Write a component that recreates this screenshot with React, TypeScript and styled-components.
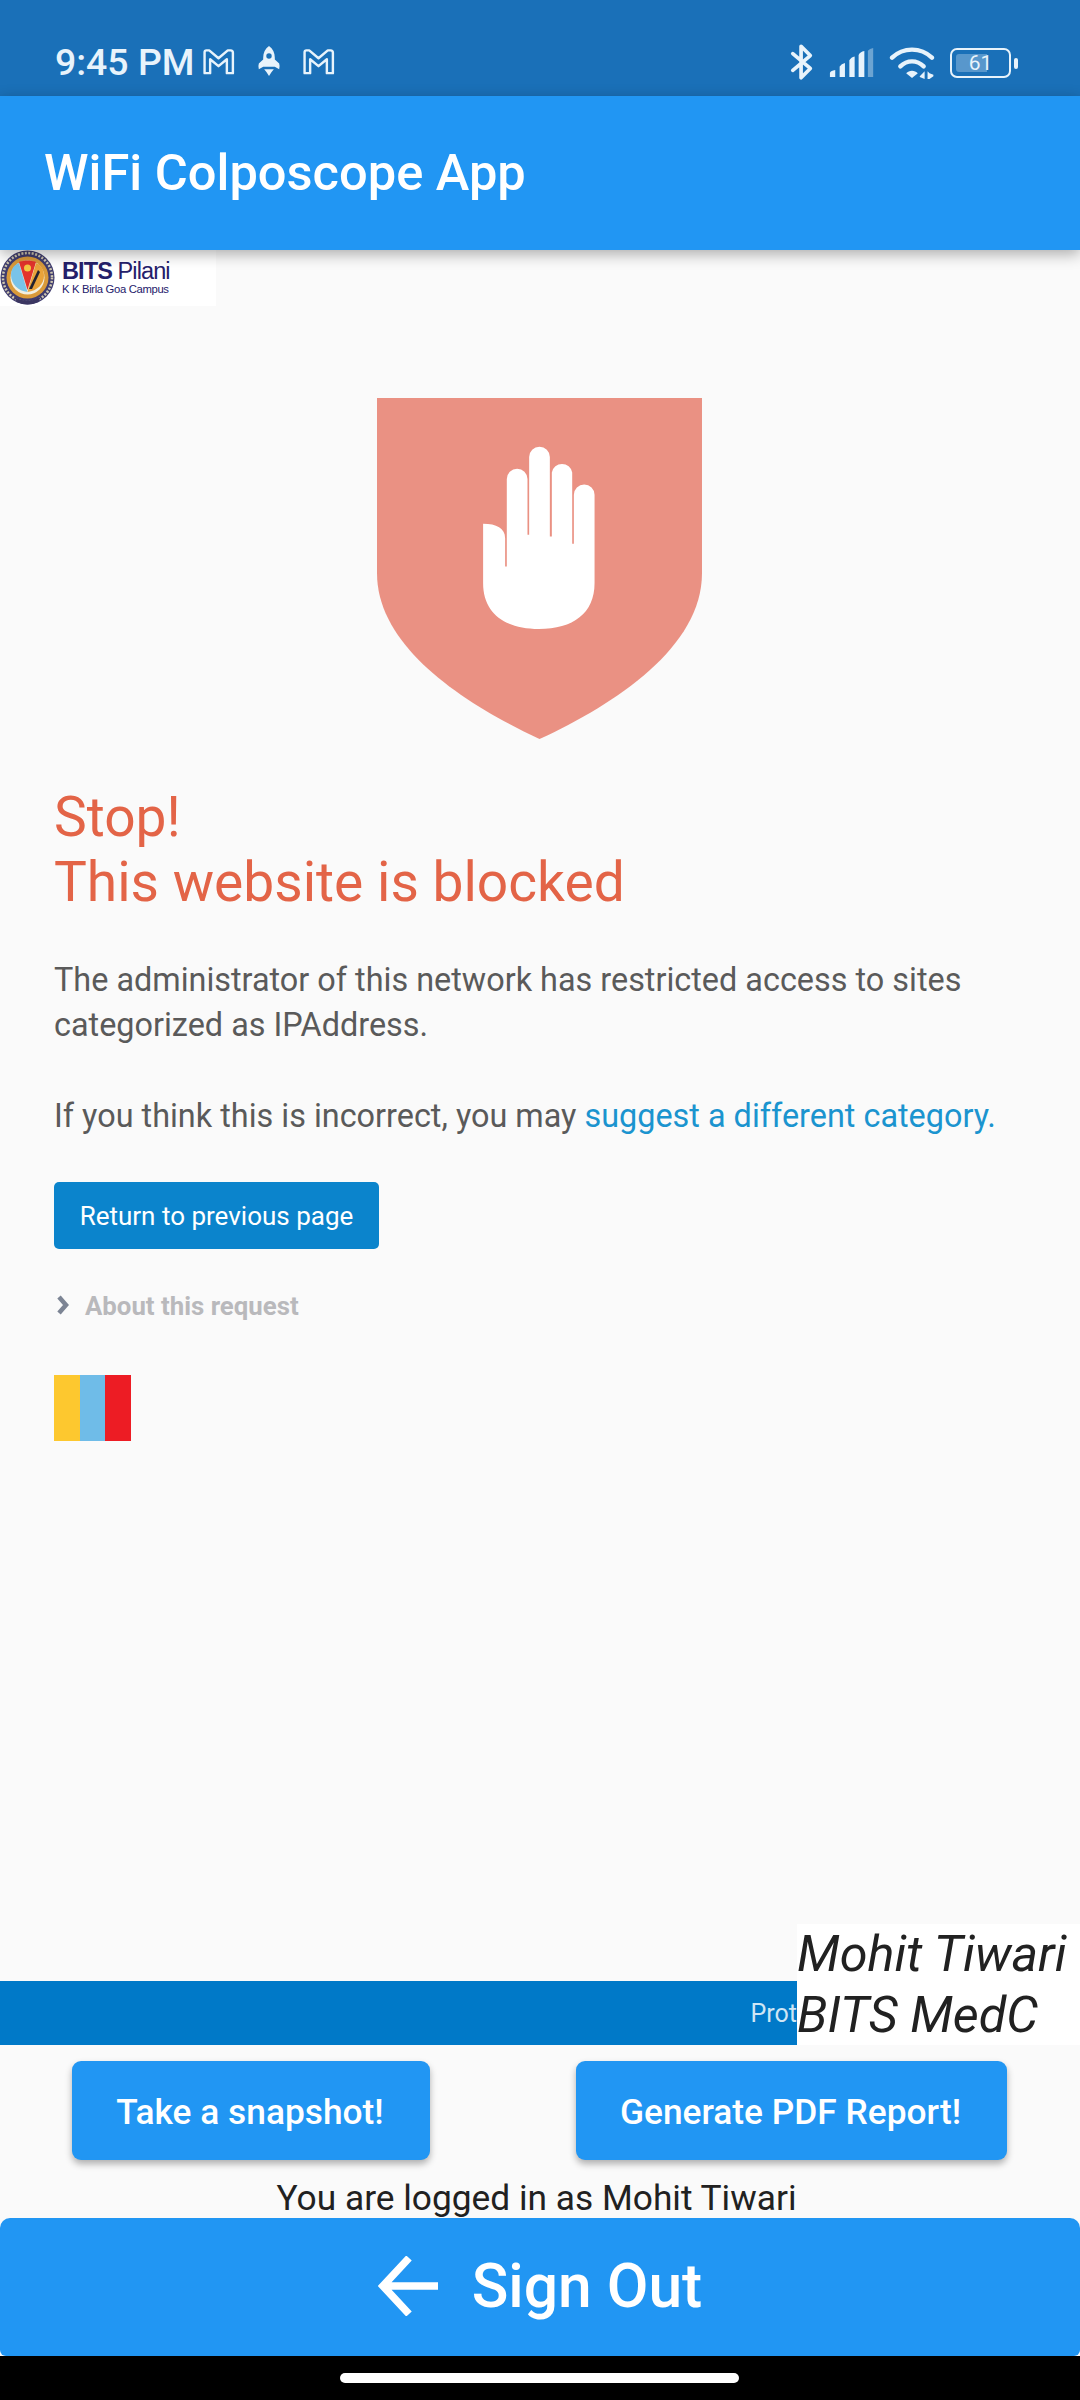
import React from "react";
import styled, { createGlobalStyle } from "styled-components";

const Global = createGlobalStyle`
  html, body { margin: 0; padding: 0; background: #fafafa; }
  * { box-sizing: border-box; }
  body { font-family: Roboto, "Liberation Sans", sans-serif; }
`;

const Screen = styled.div`
  width: 1080px; height: 2400px; display: flex; flex-direction: column; overflow: hidden; background: #fafafa;
`;
const StatusBar = styled.div`
  height: 96px; flex: none; background: #1a70b8; color: #e8f3fb; display: flex; align-items: flex-start;
  justify-content: space-between; padding: 39px 62px 0 55px;
`;
const StatusLeft = styled.div`display: flex; align-items: center; height: 45px;`;
const Time = styled.span`font-size: 37.4px; font-weight: 500; line-height: 48px; width: 147px; white-space: nowrap;`;
const StatusIcon = styled.svg<{ $ml?: number; $mt?: number }>`
  display: block; flex: none; margin-left: ${p => p.$ml ?? 0}px; margin-top: ${p => p.$mt ?? 0}px;
`;
const StatusRight = styled.div`display: flex; align-items: flex-start; height: 45px; margin-top: 3px;`;
const AppBar = styled.header`
  height: 154px; flex: none; background: #2196f3; color: #fff; display: flex; align-items: center; padding: 0 0 0 44px;
  box-shadow: 0 4px 14px rgba(0,0,0,.32); position: relative; z-index: 2;
`;
const AppTitle = styled.h1`margin: 0; font-size: 50.6px; font-weight: 500; line-height: 1;`;
const Page = styled.main`flex: 1; display: flex; flex-direction: column; min-height: 0;`;
const LogoCard = styled.div`
  width: 216px; height: 56px; background: #fff; display: flex; align-items: center; flex: none;
`;
const LogoText = styled.div`display: flex; flex-direction: column; margin-left: 6px; color: #25206b; margin-top: -2px;`;
const LogoTitle = styled.div`font-size: 23.5px; line-height: 24px; letter-spacing: -.9px; font-family: "Liberation Sans", sans-serif; white-space: nowrap;`;
const LogoStrong = styled.b`font-weight: 700;`;
const LogoSub = styled.div`font-size: 11.3px; line-height: 13px; letter-spacing: -.35px; font-family: "Liberation Sans", sans-serif; white-space: nowrap;`;
const Notice = styled.section`flex: 1; padding: 92px 0 0 54px; display: flex; flex-direction: column; align-items: flex-start;`;
const Shield = styled.svg`display: block; margin-left: 323px; flex: none;`;
const Heading = styled.h2`
  margin: 46px 0 0; font-size: 55.1px; line-height: 65px; font-weight: 400; color: #e36447;
`;
const Copy = styled.p`
  margin: 0; font-size: 32.4px; line-height: 45px; font-weight: 400; color: #5a5a5a; white-space: nowrap;
`;
const CopyFirst = styled(Copy)`margin-top: 43px;`;
const CopySecond = styled(Copy)`margin-top: 46px;`;
const TextLink = styled.a`color: #1b94cf; text-decoration: none;`;
const ReturnButton = styled.button`
  margin-top: 43px; width: 325px; height: 67px; border: 0; border-radius: 5px; background: #0b84cc; color: #fff;
  font: 400 26px Roboto, sans-serif; padding: 0;
`;
const Disclosure = styled.div`display: flex; align-items: center; margin-top: 39px; height: 36px; color: #b9b9bc;`;
const DisclosureLabel = styled.span`font-size: 25.8px; font-weight: 700; margin-left: 14px;`;
const Flag = styled.div`display: flex; margin-top: 51px; height: 66px;`;
const FlagStripe = styled.div<{ $c: string; $w: number }>`width: ${p => p.$w}px; background: ${p => p.$c};`;
const BannerRow = styled.div`display: flex; align-items: flex-end; flex: none;`;
const Banner = styled.div`
  width: 797px; height: 64px; background: #0079c8; color: #cfe6f5; display: flex; align-items: center; justify-content: flex-end;
  font-size: 25px; overflow: hidden;
`;
const Signature = styled.div`
  width: 283px; height: 121px; background: #fff; color: #212121; font-style: italic; font-size: 50.4px; line-height: 60.5px; font-weight: 400;
  white-space: nowrap;
`;
const Actions = styled.div`
  display: flex; flex: none; padding: 16px 73px 0 72px; justify-content: space-between; height: 130px;
`;
const ActionButton = styled.button<{ $w: number }>`
  width: ${p => p.$w}px; height: 99px; border: 0; border-radius: 9px; background: #2196f3; color: #fff; padding: 2px 2px 0 0;
  font: 500 35.3px Roboto, sans-serif; box-shadow: 0 4px 7px rgba(0,0,0,.3);
`;
const LoggedIn = styled.div`
  height: 43px; flex: none; text-align: center; font-size: 35.3px; line-height: 46px; color: #212121; padding-right: 7px; white-space: nowrap;
`;
const SignOut = styled.button`
  height: 138px; flex: none; width: 100%; border: 0; border-radius: 10px 10px 6px 6px; background: #2196f3; color: #fff;
  display: flex; align-items: center; justify-content: center; padding: 0 0 2px 0; font: 500 60.5px Roboto, sans-serif;
`;
const SignOutIcon = styled.svg`display: block; margin-right: 34px;`;
const NavBar = styled.div`height: 44px; flex: none; background: #000; display: flex; justify-content: center; padding: 17px 2px 0 0;`;
const HomePill = styled.div`width: 399px; height: 10px; border-radius: 5px; background: #fff;`;

const MailIcon = ({ ml }: { ml: number }) => (
  <StatusIcon $ml={ml} width="33" height="26" viewBox="0 0 34 28" fill="none" stroke="#e8f3fb" strokeWidth="2.6" strokeLinejoin="round">
    <path d="M2 3.5 Q2 1.5 4 1.5 H7 L17 10 L27 1.5 H30 Q32.5 1.5 32.5 4 V26 H26 V11 L17 18.5 L8 11 V26 H2 Z" />
  </StatusIcon>
);

const Rocket = () => (
  <StatusIcon $ml={22} width="24" height="31" viewBox="0 0 24 32" fill="#e8f3fb">
    <path fillRule="evenodd" d="M12 0 C16 3 18 7 18 12 V14 L22.5 18 Q23.5 21 22.5 24 L18 21.5 H6 L1.5 24 Q.5 21 1.5 18 L6 14 V12 C6 7 8 3 12 0 Z M12 7.5 A2.8 2.8 0 1 0 12 13.1 A2.8 2.8 0 1 0 12 7.5 Z" />
    <path d="M7 24 H17 L14.5 27 L12 31 L9.5 27 Z" />
  </StatusIcon>
);

const Bluetooth = () => (
  <StatusIcon width="24" height="40" viewBox="0 0 26 40" fill="none" stroke="#e8f3fb" strokeWidth="4" strokeLinecap="round" strokeLinejoin="round">
    <path d="M3 11 L22 27 L12 37 V3 L22 13 L3 29" />
  </StatusIcon>
);

const Signal = () => (
  <StatusIcon $ml={14} $mt={6} width="48" height="30" viewBox="0 0 50 34">
    <path fill="#e8f3fb" d="M0 33 V28 Q1 26 6 25 V33 Z M11 33 V21 Q13 18 17 17 V33 Z M22 33 V14 Q24 10 28 9.5 V33 Z M32.5 33 V8 Q34 4.5 39 3.5 V33 Z" />
    <path fill="#e8f3fb" opacity=".4" d="M43 33 V3 Q45 .5 49 0 V33 Z" />
  </StatusIcon>
);

const Wifi = () => (
  <StatusIcon $ml={13} $mt={4} width="46" height="35" viewBox="0 0 46 36">
    <g fill="none" stroke="#e8f3fb" strokeLinecap="round">
      <path strokeWidth="4.5" d="M2.5 12 C14 1 32 1 43.5 12" />
      <path strokeWidth="4.5" d="M11 21 C18 14 28 14 35 21" />
    </g>
    <path fill="#e8f3fb" d="M17 28 C20 24.5 26 24.5 29 28 L23 33 Z" />
    <path fill="#e8f3fb" d="M36 26 V34 L31 32 V31 Z M39 26 V34 H41 L45 31 V29.5 L41 28 Z" />
  </StatusIcon>
);

const BatteryBody = styled.div`
  position: relative; width: 61px; height: 30px; border: 2.5px solid #e8f3fb; border-radius: 7px; margin: 6px 0 0 15px;
  display: flex; align-items: center; justify-content: center;
`;
const BatteryFill = styled.div`
  position: absolute; left: 4px; top: 4px; bottom: 4px; width: 31px; border-radius: 3px 0 0 3px; background: rgba(232,243,251,.3);
`;
const BatteryValue = styled.span`position: relative; font-size: 21px; line-height: 1; color: #e8f3fb;`;
const BatteryCap = styled.div`width: 4px; height: 11px; border-radius: 2px; background: #e8f3fb; margin: 16px 0 0 3px;`;

const EmblemSvg = styled.svg`display: block; flex: none;`;

const Emblem = () => (
  <EmblemSvg width="56" height="56" viewBox="0 0 56 56">
    <circle cx="27.5" cy="27.5" r="27" fill="#3f3c6e" />
    <circle cx="27.5" cy="27.5" r="24.5" fill="none" stroke="#cfc8b0" strokeWidth="2.5" strokeDasharray="2 1.5" />
    <circle cx="27.5" cy="27.5" r="21" fill="#d99a3a" />
    <circle cx="27.5" cy="27.5" r="17" fill="#f2efe0" />
    <path fill="#79c3e8" d="M11 25 C11 19 14 15 19 13 L27.5 42 C18 41 11 34 11 25 Z" />
    <path fill="#e2332c" d="M19 12 C24 10 31 10 36 12 L27.5 40 Z" />
    <path fill="#e9a33a" d="M36 13 C41 15 44 20 44 26 C44 34 37 41 27.5 42 Z" />
    <path fill="#22222f" d="M38 20 L29 39 L32 39 L40 22 Z" />
    <circle cx="27.5" cy="18" r="3.5" fill="#f4c842" />
    <path fill="#3a3560" d="M14 47 Q27.5 54 41 47 L38 52 Q27.5 57 17 52 Z" />
  </EmblemSvg>
);

export default function App() {
  return (
    <Screen>
      <Global />
      <StatusBar>
        <StatusLeft>
          <Time>9:45 PM</Time>
          <MailIcon ml={0} />
          <Rocket />
          <MailIcon ml={21} />
        </StatusLeft>
        <StatusRight>
          <Bluetooth />
          <Signal />
          <Wifi />
          <BatteryBody>
            <BatteryFill />
            <BatteryValue>61</BatteryValue>
          </BatteryBody>
          <BatteryCap />
        </StatusRight>
      </StatusBar>
      <AppBar>
        <AppTitle>WiFi Colposcope App</AppTitle>
      </AppBar>
      <Page>
        <LogoCard>
          <Emblem />
          <LogoText>
            <LogoTitle><LogoStrong>BITS</LogoStrong> Pilani</LogoTitle>
            <LogoSub>K K Birla Goa Campus</LogoSub>
          </LogoText>
        </LogoCard>
        <Notice>
          <Shield width="325" height="341" viewBox="82 55 974 1022">
            <path fill="#ea9183" d="M82 55 H1056 V580 C1056 800 800 970 569 1077 C340 970 82 800 82 580 Z" />
            <path fill="#fff" d="M400 432 C440 432 466 445 466 475 V560 H471 V298 A31 31 0 0 1 533 298 V465 H538 V232 A31 31 0 0 1 600 232 V470 H606 V278 A31 31 0 0 1 667 278 V492 H672 V345 A31 31 0 0 1 734 345 V610 C734 700 670 747 567 747 C465 747 400 700 400 610 Z" />
          </Shield>
          <Heading>Stop!<br />This website is blocked</Heading>
          <CopyFirst>The administrator of this network has restricted access to sites<br />categorized as IPAddress.</CopyFirst>
          <CopySecond>If you think this is incorrect, you may <TextLink href="#">suggest a different category.</TextLink></CopySecond>
          <ReturnButton>Return to previous page</ReturnButton>
          <Disclosure>
            <svg width="17" height="24" viewBox="0 0 17 24" fill="none" stroke="#7c8494" strokeWidth="4.5">
              <path d="M5 3 L12 11 L5 19" />
            </svg>
            <DisclosureLabel>About this request</DisclosureLabel>
          </Disclosure>
          <Flag>
            <FlagStripe $c="#fdc82f" $w={26} />
            <FlagStripe $c="#6fbce8" $w={25} />
            <FlagStripe $c="#ed1c24" $w={26} />
          </Flag>
        </Notice>
        <BannerRow>
          <Banner>Prot</Banner>
          <Signature>Mohit Tiwari<br />BITS MedC</Signature>
        </BannerRow>
        <Actions>
          <ActionButton $w={358}>Take a snapshot!</ActionButton>
          <ActionButton $w={431}>Generate PDF Report!</ActionButton>
        </Actions>
        <LoggedIn>You are logged in as Mohit Tiwari</LoggedIn>
        <SignOut>
          <SignOutIcon width="60" height="60" viewBox="0 0 60 60" fill="none" stroke="#fff" strokeWidth="7.5">
            <path d="M60 30 H5 M31 2 L5 30 L31 58" />
          </SignOutIcon>
          Sign Out
        </SignOut>
      </Page>
      <NavBar><HomePill /></NavBar>
    </Screen>
  );
}
